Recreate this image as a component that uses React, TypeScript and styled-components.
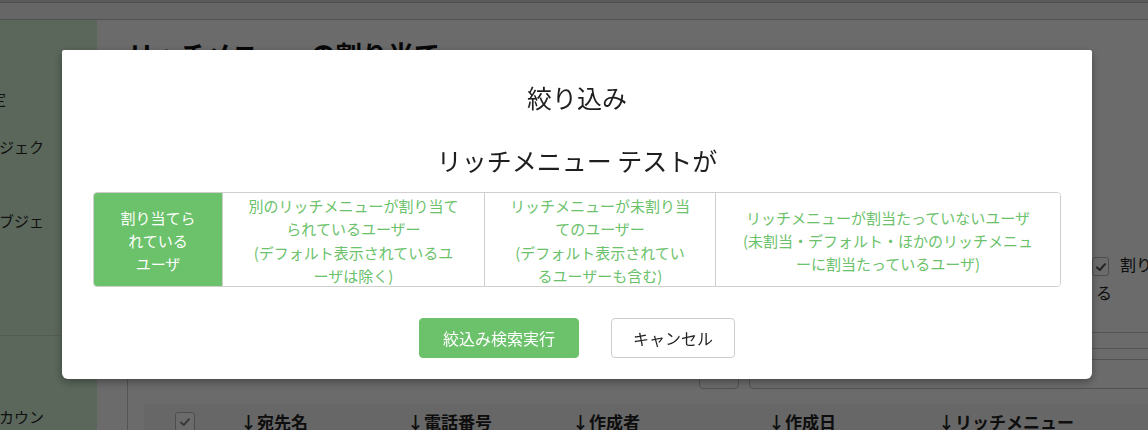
import React from "react";
import styled, { createGlobalStyle } from "styled-components";

const GlobalStyle = createGlobalStyle`
  html, body {
    margin: 0;
    padding: 0;
  }
  body {
    width: 1148px;
    height: 430px;
    overflow: hidden;
    font-family: "Noto Sans CJK JP", "Noto Sans", sans-serif;
    color: #222;
    background: #fff;
  }
  * { box-sizing: border-box; }
`;

const GREEN = "#6bc26b";

/* ---------- underlying page ---------- */
const Page = styled.div`
  width: 1222px;
  height: 430px;
  overflow: hidden;
  display: flex;
  flex-direction: column;
`;

const TopStrip = styled.div`
  flex-shrink: 0;
  height: 3px;
  background: #d6d6d6;
  border-bottom: 1px solid #bdbdbd;
`;

const HeaderBar = styled.div`
  flex-shrink: 0;
  height: 17px;
  background: #f3f3f3;
  border-bottom: 1px solid #c4c4c4;
`;

const Body = styled.div`
  flex: 1 0 auto;
  display: flex;
`;

const Sidebar = styled.nav`
  width: 97px;
  flex: 0 0 97px;
  background: #d9f5d9;
  overflow: hidden;
  display: flex;
  flex-direction: column;
`;

const NavItem = styled.div<{ $gap: number; $shift: number }>`
  flex-shrink: 0;
  margin-top: ${(p) => p.$gap}px;
  margin-left: ${(p) => p.$shift}px;
  font-size: 15px;
  line-height: 24px;
  color: #2a2a2a;
  white-space: nowrap;
`;

const NavDivider = styled.div`
  flex-shrink: 0;
  margin-top: 102px;
  height: 1px;
  background: #c6dcc6;
`;

const Main = styled.main`
  flex: 1;
  padding-left: 30px;
  display: flex;
  flex-direction: column;
  & > * {
    flex-shrink: 0;
  }
`;

const PageTitle = styled.h1`
  margin: 16px 0 0 1px;
  font-size: 26px;
  line-height: 36px;
  font-weight: 700;
  color: #111;
  white-space: nowrap;
`;

const FilterArea = styled.div`
  display: grid;
  grid-template-columns: 1fr 130px;
  align-items: start;
  margin-top: 182px;
  height: 78px;
`;

const CheckLabel = styled.label`
  display: block;
  font-size: 16px;
  line-height: 20px;
  color: #222;
  white-space: nowrap;
`;

const CheckBox = styled.span<{ $size?: number; $lift?: number }>`
  display: inline-flex;
  align-items: center;
  justify-content: center;
  vertical-align: middle;
  width: ${(p) => p.$size ?? 17}px;
  height: ${(p) => p.$size ?? 19}px;
  border: 1px solid #b8b8b8;
  border-radius: 3px;
  background: #fff;
  margin-right: 11px;
  margin-top: ${(p) => -(p.$lift ?? 0)}px;
`;

const WrapLine = styled.span`
  display: block;
  padding-left: 4px;
  margin-top: 6px;
`;

const Divider = styled.div`
  height: 1px;
  background: #c8c8c8;
  margin-left: 860px;
`;

const ListCard = styled.section`
  margin-top: 15px;
  border: 1px solid #c8c8c8;
  border-bottom: none;
  border-radius: 4px 4px 0 0;
  flex: 1 0 auto;
`;

const SearchRow = styled.div`
  display: flex;
  justify-content: flex-end;
  gap: 10px;
  padding: 10px 10px 0;
`;

const SearchBox = styled.div<{ $w: number }>`
  width: ${(p) => p.$w}px;
  height: 30px;
  border: 1px solid #c4c4c4;
  border-radius: 4px;
  background: #fff;
`;

const TableHead = styled.div`
  margin: 15px 0 0 16px;
  background: #f6f6f6;
  display: grid;
  grid-template-columns: 96px 167px 165px 196px 170px 1fr;
  align-items: center;
  padding-top: 6px;
  height: 30px;
`;

const HeadCheck = styled.div`
  padding-left: 31px;
  display: flex;
`;

const HeadCell = styled.div`
  font-size: 17px;
  font-weight: 700;
  line-height: 24px;
  color: #222;
  white-space: nowrap;
`;

/* ---------- modal ---------- */
const Overlay = styled.div`
  position: fixed;
  inset: 0;
  background: rgba(0, 0, 0, 0.58);
  display: flex;
  align-items: flex-start;
  padding: 50px 0 0 62px;
`;

const Modal = styled.div`
  width: 1030px;
  background: #fff;
  border-radius: 2px 2px 6px 6px;
  box-shadow: 0 3px 9px rgba(0, 0, 0, 0.35);
  padding: 29px 31px 21px;
  display: flex;
  flex-direction: column;
  align-items: center;
`;

const Heading = styled.h2<{ $gap?: number }>`
  margin: ${(p) => p.$gap ?? 0}px 0 0;
  font-size: 25px;
  line-height: 36px;
  font-weight: 400;
  color: #1e1e1e;
  text-align: center;
  white-space: nowrap;
`;

const Segment = styled.div`
  margin-top: 14px;
  width: 968px;
  display: flex;
  border: 1px solid #cfcfcf;
  border-radius: 4px;
  overflow: hidden;
`;

const SegCell = styled.button<{ $w: number; $active?: boolean }>`
  flex: 0 0 ${(p) => p.$w}px;
  height: 93px;
  display: flex;
  flex-direction: column;
  align-items: center;
  justify-content: center;
  border: none;
  border-left: ${(p) => (p.$active ? "none" : "1px solid #cfcfcf")};
  background: ${(p) => (p.$active ? GREEN : "#fff")};
  color: ${(p) => (p.$active ? "#fff" : GREEN)};
  font-family: inherit;
  font-size: 15px;
  line-height: 23.3px;
  padding: 2px 0 0;
  cursor: pointer;
  &:first-child {
    border-left: none;
  }
`;

const Line = styled.span`
  display: block;
  white-space: nowrap;
`;

const Footer = styled.div`
  margin-top: 31px;
  display: flex;
  gap: 32px;
  justify-content: center;
`;

const Button = styled.button<{ $primary?: boolean }>`
  height: 40px;
  padding: 0 ${(p) => (p.$primary ? 23 : 21)}px;
  border-radius: 4px;
  border: 1px solid ${(p) => (p.$primary ? GREEN : "#cccccc")};
  background: ${(p) => (p.$primary ? GREEN : "#fff")};
  color: ${(p) => (p.$primary ? "#fff" : "#222")};
  font-family: inherit;
  font-size: 16px;
  line-height: 22px;
  cursor: pointer;
`;

const Check = ({ color = "#555", size = 12 }: { color?: string; size?: number }) => (
  <svg width={size} height={size} viewBox="0 0 12 12" aria-hidden>
    <path d="M2 6.4 L4.8 9 L10 3.2" fill="none" stroke={color} strokeWidth="2" strokeLinecap="round" strokeLinejoin="round" />
  </svg>
);

const segments: { w: number; active?: boolean; lines: string[] }[] = [
  { w: 128, active: true, lines: ["割り当てら", "れている", "ユーザ"] },
  {
    w: 262,
    lines: ["別のリッチメニューが割り当て", "られているユーザー", "(デフォルト表示されているユ", "ーザは除く)"],
  },
  {
    w: 231,
    lines: ["リッチメニューが未割り当", "てのユーザー", "(デフォルト表示されてい", "るユーザーも含む)"],
  },
  {
    w: 345,
    lines: ["リッチメニューが割当たっていないユーザ", "(未割当・デフォルト・ほかのリッチメニュ", "ーに割当たっているユーザ)"],
  },
];

const headCols = ["↓宛先名", "↓電話番号", "↓作成者", "↓作成日", "↓リッチメニュー"];

export default function App() {
  return (
    <>
      <GlobalStyle />
      <Page>
        <TopStrip />
        <HeaderBar />
        <Body>
          <Sidebar>
            <NavItem $gap={67} $shift={-24}>設定</NavItem>
            <NavItem $gap={24} $shift={-1}>ジェク</NavItem>
            <NavItem $gap={50} $shift={-1}>ブジェ</NavItem>
            <NavDivider />
            <NavItem $gap={69} $shift={-1}>カウン</NavItem>
          </Sidebar>
          <Main>
            <PageTitle>リッチメニューの割り当て</PageTitle>
            <FilterArea>
              <div />
              <CheckLabel>
                <CheckBox>
                  <Check />
                </CheckBox>
                割り当てられてい
                <WrapLine>る</WrapLine>
              </CheckLabel>
            </FilterArea>
            <Divider />
            <ListCard>
              <SearchRow>
                <SearchBox $w={40} />
                <SearchBox $w={462} />
              </SearchRow>
              <TableHead>
                <HeadCheck>
                  <CheckBox $size={20}>
                    <Check color="#888" />
                  </CheckBox>
                </HeadCheck>
                {headCols.map((c) => (
                  <HeadCell key={c}>{c}</HeadCell>
                ))}
              </TableHead>
            </ListCard>
          </Main>
        </Body>
      </Page>

      <Overlay>
        <Modal role="dialog" aria-label="絞り込み">
          <Heading>絞り込み</Heading>
          <Heading $gap={27}>リッチメニュー テストが</Heading>
          <Segment>
            {segments.map((s, i) => (
              <SegCell key={i} $w={s.w} $active={s.active}>
                {s.lines.map((l) => (
                  <Line key={l}>{l}</Line>
                ))}
              </SegCell>
            ))}
          </Segment>
          <Footer>
            <Button $primary>絞込み検索実行</Button>
            <Button>キャンセル</Button>
          </Footer>
        </Modal>
      </Overlay>
    </>
  );
}
